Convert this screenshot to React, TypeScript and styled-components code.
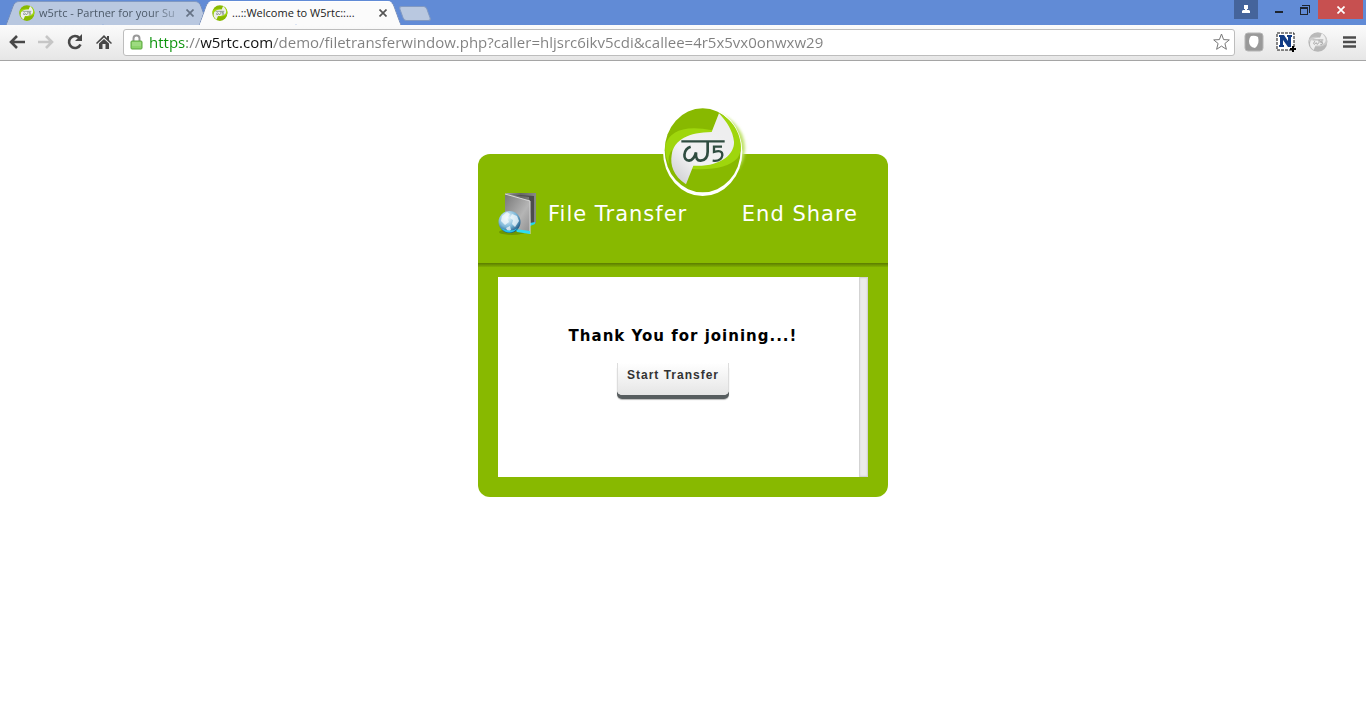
import React from "react";
import styled, { createGlobalStyle, css } from "styled-components";

const GlobalStyle = createGlobalStyle`
  * { box-sizing: border-box; }
  body { margin: 0; background: #fff; font-family: "DejaVu Sans", Verdana, sans-serif; }
  button { margin: 0; padding: 0; border: 0; background: none; font: inherit; color: inherit; cursor: pointer; }
  svg { display: block; flex: none; }
`;

const uiFont = css`
  font-family: "Open Sans", "Noto Sans", sans-serif;
`;

const TitleBar = styled.header`
  display: flex;
  align-items: flex-end;
  height: 25px;
  padding: 0 3px 0 10px;
  background: #618bd6;
  ${uiFont}
`;

const TabStrip = styled.nav`
  display: flex;
  align-items: flex-end;
  flex: 1;
`;

const Tab = styled.div<{ $active?: boolean }>`
  position: relative;
  z-index: ${(p) => (p.$active ? 2 : 1)};
  display: flex;
  align-items: center;
  gap: 4px;
  width: 193px;
  height: 24px;
  padding: 0 5px 0 9px;
  font-size: 11px;
  line-height: 16px;
  color: ${(p) => (p.$active ? "#222" : "#4c5968")};

  &::before,
  &::after {
    content: "";
    position: absolute;
    z-index: -1;
    top: 0;
    bottom: 0;
    background: ${(p) => (p.$active ? "#fbfbfb" : "#b9c8e0")};
    border-top: 1px solid ${(p) => (p.$active ? "#fff" : "#8199c2")};
  }
  &::before {
    left: 0;
    right: 50%;
    border-left: 1px solid #7088b5;
    border-top-left-radius: 5px;
    transform: skewX(-20deg);
  }
  &::after {
    left: calc(50% - 8px);
    right: 0;
    border-right: 1px solid #7088b5;
    border-top-right-radius: 5px;
    transform: skewX(20deg);
  }
`;

const TabTitle = styled.a<{ $fade?: boolean }>`
  flex: 1;
  white-space: nowrap;
  color: inherit;
  text-decoration: none;
  ${(p) => p.$fade && "mask-image: linear-gradient(90deg, #000 80%, rgba(0, 0, 0, 0.3));"}
`;

const TabClose = styled.button`
  display: grid;
  place-items: center;
  width: 16px;
  height: 16px;
`;

const NewTab = styled.button`
  width: 28px;
  height: 15px;
  margin: 0 0 4px 5px;
  background: #b9c8e0;
  border: 1px solid #8199c2;
  border-radius: 3px;
  transform: skewX(20deg);
`;

const WindowControls = styled.div`
  display: flex;
  align-self: flex-start;
`;

const WindowButton = styled.button<{ $kind?: "user" | "close" }>`
  display: grid;
  place-items: center;
  width: ${(p) => (p.$kind === "user" ? 24 : p.$kind === "close" ? 45 : 26)}px;
  height: 19px;
  margin-right: ${(p) => (p.$kind === "user" ? 8 : 0)}px;
  background: ${(p) =>
    p.$kind === "user" ? "#45649b" : p.$kind === "close" ? "#c75050" : "transparent"};
`;

const Toolbar = styled.div`
  display: flex;
  align-items: center;
  height: 36px;
  padding: 0 2px 1px;
  background: linear-gradient(#fbfbfb, #e6e6e6);
  border-bottom: 1px solid #a5a5a5;
`;

const ToolButton = styled.button`
  display: grid;
  place-items: center;
  width: 29px;
  height: 26px;
  flex: none;
`;

const Extensions = styled.div`
  display: flex;
  gap: 3px;
  margin-left: 4px;
`;

const AddressBar = styled.form`
  display: flex;
  align-items: center;
  flex: 1;
  height: 27px;
  margin-left: 5px;
  padding: 0 4px 0 6px;
  background: #fff;
  border: 1px solid #bdbdbd;
  border-radius: 3px;
`;

const Address = styled.input`
  flex: 1;
  min-width: 0;
  height: 24px;
  margin: 0 0 0 6px;
  padding: 0;
  border: 0;
  outline: 0;
  ${uiFont}
  font-size: 15px;
  line-height: 24px;
  color: transparent;
  background: linear-gradient(90deg, #0a930a 38px, #808080 38px, #808080 52px, #111 52px, #111 124px, #808080 124px);
  background-clip: text;
  -webkit-background-clip: text;
`;

const Page = styled.main`
  display: flex;
  justify-content: center;
  padding: 93px 20px 40px;
`;

const Panel = styled.section`
  position: relative;
  width: 410px;
  max-width: 100%;
  padding-bottom: 20px;
  background: #88b900;
  border-radius: 12px;
`;

const Logo = styled.svg`
  position: absolute;
  top: -47px;
  left: 185px;
`;

const PanelHeader = styled.div`
  display: flex;
  align-items: center;
  justify-content: space-between;
  height: 109px;
  padding: 10px 30px 0 20px;
`;

const HeaderGroup = styled.div`
  display: flex;
  align-items: center;
  gap: 9px;
`;

const headerText = css`
  font-size: 21px;
  font-weight: 400;
  line-height: 26px;
  letter-spacing: 1px;
  color: #fff;
  white-space: nowrap;
`;

const Title = styled.h1`
  margin: 0;
  ${headerText}
`;

const EndLink = styled.a`
  text-decoration: none;
  ${headerText}
`;

const Divider = styled.div`
  height: 4px;
  margin-bottom: 10px;
  background: linear-gradient(#5b7c00, #80ae00);
`;

const Content = styled.div`
  display: flex;
  height: 200px;
  margin: 0 20px;
  background: #fff;
`;

const Message = styled.div`
  flex: 1;
  display: flex;
  flex-direction: column;
  align-items: center;
  padding: 48px 0 0 9px;
`;

const Thanks = styled.p`
  margin: 0 0 16px;
  font-size: 15px;
  font-weight: 700;
  line-height: 22px;
  letter-spacing: 1px;
  color: #000;
`;

const StartButton = styled.button`
  width: 112px;
  height: 32px;
  margin-right: 20px;
  padding-bottom: 8px;
  font: 700 12px/16px "Liberation Sans", Arial, sans-serif;
  letter-spacing: 1px;
  color: #333;
  background: linear-gradient(#fff, #e5e5e5);
  border: solid #ddd;
  border-width: 0 1px;
  border-radius: 0 0 5px 5px;
  box-shadow: 0 4px 0 #575d5f, 0 5px 1px #bbb;
`;

const ScrollTrack = styled.div`
  width: 9px;
  background: #ebebeb;
  border: 1px solid #d3d3d3;
  box-shadow: inset 0 0 2px #d3d3d3;
`;

function Emblem() {
  return (
    <>
      <ellipse cx="158" cy="166" rx="114" ry="126" fill="#88b900" />
      <path d="M46 150C58 108 105 88 187 106L207 55Q262 82 272 145Q276 170 262 190Q225 228 126 222L130 200Q70 200 65 165Q52 185 57 208Q43 180 46 150Z" fill="#9fd60c" />
      <path d="M207 55C230 80 249 108 252 140C254 177 213 216 130 212L108 268C70 243 60 210 65 180C72 133 117 112 185 111Z" fill="url(#leaf)" />
      <g fill="none" stroke="#2f4c40" strokeWidth="7">
        <path d="M94 139H224" />
        <path d="M122 155C99 162 97 197 117 197Q132 195 138 172Q136 198 152 197Q173 195 173 170V140" strokeWidth="8" />
        <path d="M216 155H192V171Q218 163 217 181Q214 200 188 197" />
      </g>
    </>
  );
}

function LeafGradient() {
  return (
    <defs>
      <linearGradient id="leaf" x1="0" y1="1" x2="0.7" y2="0.2">
        <stop offset="0" stopColor="#c9c9cd" />
        <stop offset="0.45" stopColor="#f2f2f3" />
        <stop offset="1" stopColor="#eeeeef" />
      </linearGradient>
    </defs>
  );
}

function BrandLogo() {
  return (
    <Logo width="86" height="90" viewBox="39 36 258 270" role="img" aria-label="W5">
      <LeafGradient />
      <defs>
        <filter id="glow" x="-20%" y="-20%" width="140%" height="140%">
          <feGaussianBlur stdDeviation="5" />
        </filter>
      </defs>
      <ellipse cx="169" cy="160" rx="116" ry="110" fill="#bfe26a" filter="url(#glow)" />
      <ellipse cx="158" cy="170" rx="119" ry="133" fill="#fff" />
      <Emblem />
    </Logo>
  );
}

function Favicon({ size = 16, gray }: { size?: number; gray?: boolean }) {
  return (
    <svg width={size} height={size} viewBox="40 38 240 256" preserveAspectRatio="none"
      filter={gray ? "grayscale(1)" : undefined} opacity={gray ? 0.7 : 1} aria-hidden="true">
      <ellipse cx="158" cy="166" rx="114" ry="126" fill="#88b900" />
      <path d="M46 150C58 108 105 88 187 106L207 55Q262 82 272 145Q276 170 262 190Q225 228 126 222L65 165Z" fill="#9fd60c" />
      <path d="M207 55C230 80 249 108 252 140C254 177 213 216 130 212L108 268C70 243 60 210 65 180C72 133 117 112 185 111Z" fill="#eee" />
      <path d="M94 139H224M122 155Q95 188 117 197L138 174L152 197L173 170V140M216 155H192V171Q218 163 217 181Q214 200 188 197" fill="none" stroke="#66776e" strokeWidth="10" />
    </svg>
  );
}

function CloseGlyph({ color, size = 8 }: { color: string; size?: number }) {
  return (
    <svg width={size} height={size} viewBox="0 0 8 8" aria-hidden="true">
      <path d="M0.5 0.5L7.5 7.5M7.5 0.5L0.5 7.5" stroke={color} strokeWidth="1.7" />
    </svg>
  );
}

function FolderIcon() {
  return (
    <svg width="41" height="44" viewBox="0 0 41 44" aria-hidden="true">
      <defs>
        <linearGradient id="cover" x1="0" y1="0" x2="1" y2="1">
          <stop offset="0" stopColor="#777" />
          <stop offset="0.6" stopColor="#b5b5b5" />
          <stop offset="1" stopColor="#8d8d8d" />
        </linearGradient>
        <linearGradient id="back" x1="0" x2="1">
          <stop offset="0" stopColor="#aaa" />
          <stop offset="0.5" stopColor="#666" />
          <stop offset="1" stopColor="#888" />
        </linearGradient>
        <radialGradient id="globe" cx="0.4" cy="0.3" r="0.7">
          <stop offset="0" stopColor="#f2fafd" />
          <stop offset="0.6" stopColor="#7db8d9" />
          <stop offset="1" stopColor="#1c5580" />
        </radialGradient>
      </defs>
      <ellipse cx="14" cy="40" rx="13" ry="3" fill="#547500" opacity="0.5" />
      <path d="M7 1H38V31L32 34L30 11Z" fill="url(#back)" />
      <path d="M8 2L31 5L33 33L36 31V4Z" fill="#4c4c4c" />
      <path d="M32 31L37 30V32L32 34Z" fill="#28d5e8" />
      <path d="M7 2L32 9V42L20 39L7 34Z" fill="url(#cover)" />
      <path d="M7 2L32 9V42" fill="none" stroke="#d8d8d8" />
      <path d="M17 37L32 39V42L19 40Z" fill="#2edcf2" />
      <circle cx="11.500" cy="30" r="11" fill="url(#globe)" />
      <path d="M4 24L9 20L12 22L9 26L11 30L7 33L3 29ZM14 22L19 24L21 29L17 35L14 32L15 28L12 26ZM8 36L12 34L13 38L10 40Z" fill="#f4fafc" opacity="0.75" />
      <path d="M3 36Q11 45 20 36Q12 41 3 36" fill="#25c5ed" />
    </svg>
  );
}

export default function App() {
  return (
    <>
      <GlobalStyle />
      <TitleBar>
        <TabStrip aria-label="Tabs">
          <Tab>
            <Favicon />
            <TabTitle href="#home" $fade>w5rtc - Partner for your Su</TabTitle>
            <TabClose aria-label="Close first tab"><CloseGlyph color="#667386" /></TabClose>
          </Tab>
          <Tab $active>
            <Favicon />
            <TabTitle href="#demo">...::Welcome to W5rtc::...</TabTitle>
            <TabClose aria-label="Close current tab"><CloseGlyph color="#555" /></TabClose>
          </Tab>
          <NewTab aria-label="New tab" />
        </TabStrip>
        <WindowControls>
          <WindowButton $kind="user" aria-label="Profile">
            <svg width="10" height="10" viewBox="0 0 10 10"><path d="M3 0H7V4H6V5H8L9 6V8H1V6L2 5H4V4H3Z" fill="#fff" /></svg>
          </WindowButton>
          <WindowButton aria-label="Minimize">
            <svg width="8" height="8" viewBox="0 0 8 8"><path d="M0 5H8V7H0Z" fill="#1d2530" /></svg>
          </WindowButton>
          <WindowButton aria-label="Restore">
            <svg width="10" height="10" viewBox="0 0 10 10"><path d="M0 2H8V10H0ZM1 4V9H7V4ZM2 0H10V8H9V1H2Z" fill="#1d2530" fillRule="evenodd" /></svg>
          </WindowButton>
          <WindowButton $kind="close" aria-label="Close window"><CloseGlyph color="#fff" /></WindowButton>
        </WindowControls>
      </TitleBar>

      <Toolbar>
        <ToolButton aria-label="Back">
          <svg width="16" height="14" viewBox="0 0 16 14"><path d="M8 1L2 7L8 13M2 7H16" fill="none" stroke="#484848" strokeWidth="2.600" /></svg>
        </ToolButton>
        <ToolButton aria-label="Forward">
          <svg width="16" height="14" viewBox="0 0 16 14"><path d="M8 1L14 7L8 13M14 7H0" fill="none" stroke="#c6c6c6" strokeWidth="2.600" /></svg>
        </ToolButton>
        <ToolButton aria-label="Reload">
          <svg width="16" height="16" viewBox="0 0 16 16"><path d="M13.500 10.500A6 6 0 1 1 12.500 4" fill="none" stroke="#484848" strokeWidth="2.600" /><path d="M15 0V7H8Z" fill="#484848" /></svg>
        </ToolButton>
        <ToolButton aria-label="Home">
          <svg width="16" height="16" viewBox="0 0 16 16"><path d="M8 1L11 4V2H13V6L16 9L15 10L8 3.500L1 10L0 9Z" fill="#484848" /><path d="M8 5L13 9.500V15H9.500V10H6.500V15H3V9.500Z" fill="#484848" /></svg>
        </ToolButton>
        <AddressBar onSubmit={(e) => e.preventDefault()}>
          <svg width="13" height="16" viewBox="0 0 13 16" aria-hidden="true">
            <path d="M3.500 8V4.500A3 3 0 0 1 9.500 4.500V8" fill="none" stroke="#999" strokeWidth="2" />
            <rect x="1" y="7" width="11" height="8" rx="1" fill="#8cd46b" stroke="#5aa63e" />
            <path d="M2 9H11M2 11H11" stroke="#aee296" />
          </svg>
          <Address aria-label="Address" spellCheck={false} defaultValue="https://w5rtc.com/demo/filetransferwindow.php?caller=hljsrc6ikv5cdi&callee=4r5x5vx0onwxw29" />
          <button type="button" aria-label="Bookmark this page">
            <svg width="17" height="18" viewBox="0 0 17 18"><path d="M8.500 1L10.600 6.600L16.300 6.900L11.900 10.500L13.400 16.300L8.500 13.100L3.600 16.300L5.100 10.500L0.700 6.900L6.400 6.600Z" fill="#fff" stroke="#777" /></svg>
          </button>
        </AddressBar>
        <Extensions>
          <ToolButton aria-label="Shield extension">
            <svg width="20" height="20" viewBox="0 0 20 20"><rect x="1" y="1" width="18" height="18" rx="3" fill="#999" stroke="#b5b5b5" /><path d="M7 4Q11 3 14 5Q16 12 11 16Q5 15 5 9Q5 6 7 4Z" fill="#fff" /></svg>
          </ToolButton>
          <ToolButton aria-label="Capture extension">
            <svg width="20" height="20" viewBox="0 0 20 20"><rect x="1" y="1" width="17" height="17" fill="#fff" stroke="#111" strokeDasharray="3 1" /><path d="M3 3H8L12 9V5H11V3H16V5H15V15H12L7 8V13H8V15H3V13H4V5H3Z" fill="#123c86" /><path d="M14 17H20M17 14V20" stroke="#000" strokeWidth="2" /></svg>
          </ToolButton>
          <ToolButton aria-label="W5rtc extension"><Favicon size={20} gray /></ToolButton>
          <ToolButton aria-label="Menu">
            <svg width="13" height="12" viewBox="0 0 13 12"><path d="M0 1.500H13M0 6H13M0 10.500H13" stroke="#4c4c4c" strokeWidth="2.600" /></svg>
          </ToolButton>
        </Extensions>
      </Toolbar>

      <Page>
        <Panel>
          <BrandLogo />
          <PanelHeader>
            <HeaderGroup>
              <FolderIcon />
              <Title>File Transfer</Title>
            </HeaderGroup>
            <EndLink href="#end">End Share</EndLink>
          </PanelHeader>
          <Divider />
          <Content>
            <Message>
              <Thanks>Thank You for joining...!</Thanks>
              <StartButton type="button">Start Transfer</StartButton>
            </Message>
            <ScrollTrack />
          </Content>
        </Panel>
      </Page>
    </>
  );
}
